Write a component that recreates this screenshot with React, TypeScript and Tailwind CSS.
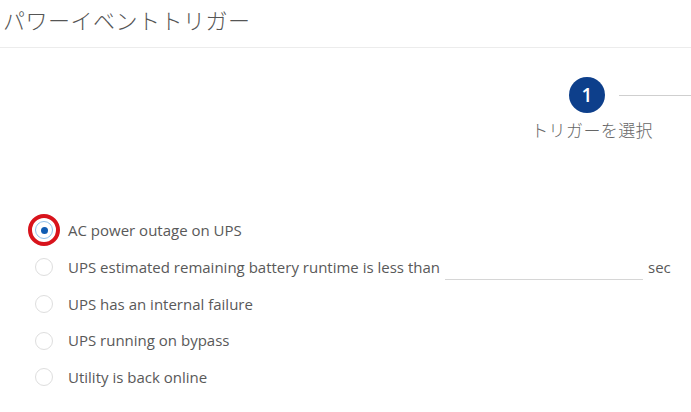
const OPTIONS = [
    "AC power outage on UPS",
    "UPS estimated remaining battery runtime is less than",
    "UPS has an internal failure",
    "UPS running on bypass",
    "Utility is back online",
];

function Radio({ checked }: { checked: boolean }) {
    return (
        <span className="relative flex items-center justify-center w-[18px] h-[18px] shrink-0">
            {checked ? (
                <>
                    <span className="absolute -inset-[7px] rounded-full border-[4px] border-[#d8131c]" />
                    <span className="w-[18px] h-[18px] rounded-full border border-[#8fc0ea] bg-white flex items-center justify-center">
                        <span className="w-[7px] h-[7px] rounded-full bg-[#0f5cb3]" />
                    </span>
                </>
            ) : (
                <span className="w-[18px] h-[18px] rounded-full border border-[#dedede] bg-white" />
            )}
        </span>
    );
}

export default function App() {
    return (
        <div className="w-[691px] h-[412px] bg-white overflow-hidden font-['Open_Sans','Noto_Sans_CJK_JP',sans-serif]">
            <div className="h-[48px] border-b border-[#ececec] pl-[3px] pt-[4px]">
                <h1 className="text-[22px] leading-[30px] font-light text-[#555] font-['Noto_Sans_CJK_JP',sans-serif] tracking-[0.5px]">
                    パワーイベントトリガー
                </h1>
            </div>

            <div className="flex flex-col items-end pt-[29px]">
                <div className="flex items-center">
                    <div className="w-[36px] h-[36px] rounded-full bg-[#0d3f8b] text-white flex items-center justify-center text-[19px] font-semibold">
                        1
                    </div>
                    <div className="ml-[14px] w-[72px] h-px bg-[#cfcfcf]" />
                </div>
                <div className="mt-[5px] mr-[38px] text-[17px] leading-[24px] text-[#666] font-['Noto_Sans_CJK_JP',sans-serif] font-light tracking-[0.4px]">
                    トリガーを選択
                </div>
            </div>

            <div className="mt-[70px] pl-[35px] flex flex-col">
                {OPTIONS.map((label, i) => (
                    <div key={label} className="h-[36.75px] flex items-center">
                        <Radio checked={i === 0} />
                        <span className="ml-[15px] text-[15px] text-[#595959] whitespace-nowrap">{label}</span>
                        {i === 1 && (
                            <>
                                <span className="ml-[5px] w-[198px] h-[20px] border-b border-[#d6d6d6] self-center mt-[6px]" />
                                <span className="ml-[5px] text-[15px] text-[#595959]">sec</span>
                            </>
                        )}
                    </div>
                ))}
            </div>
        </div>
    );
}
